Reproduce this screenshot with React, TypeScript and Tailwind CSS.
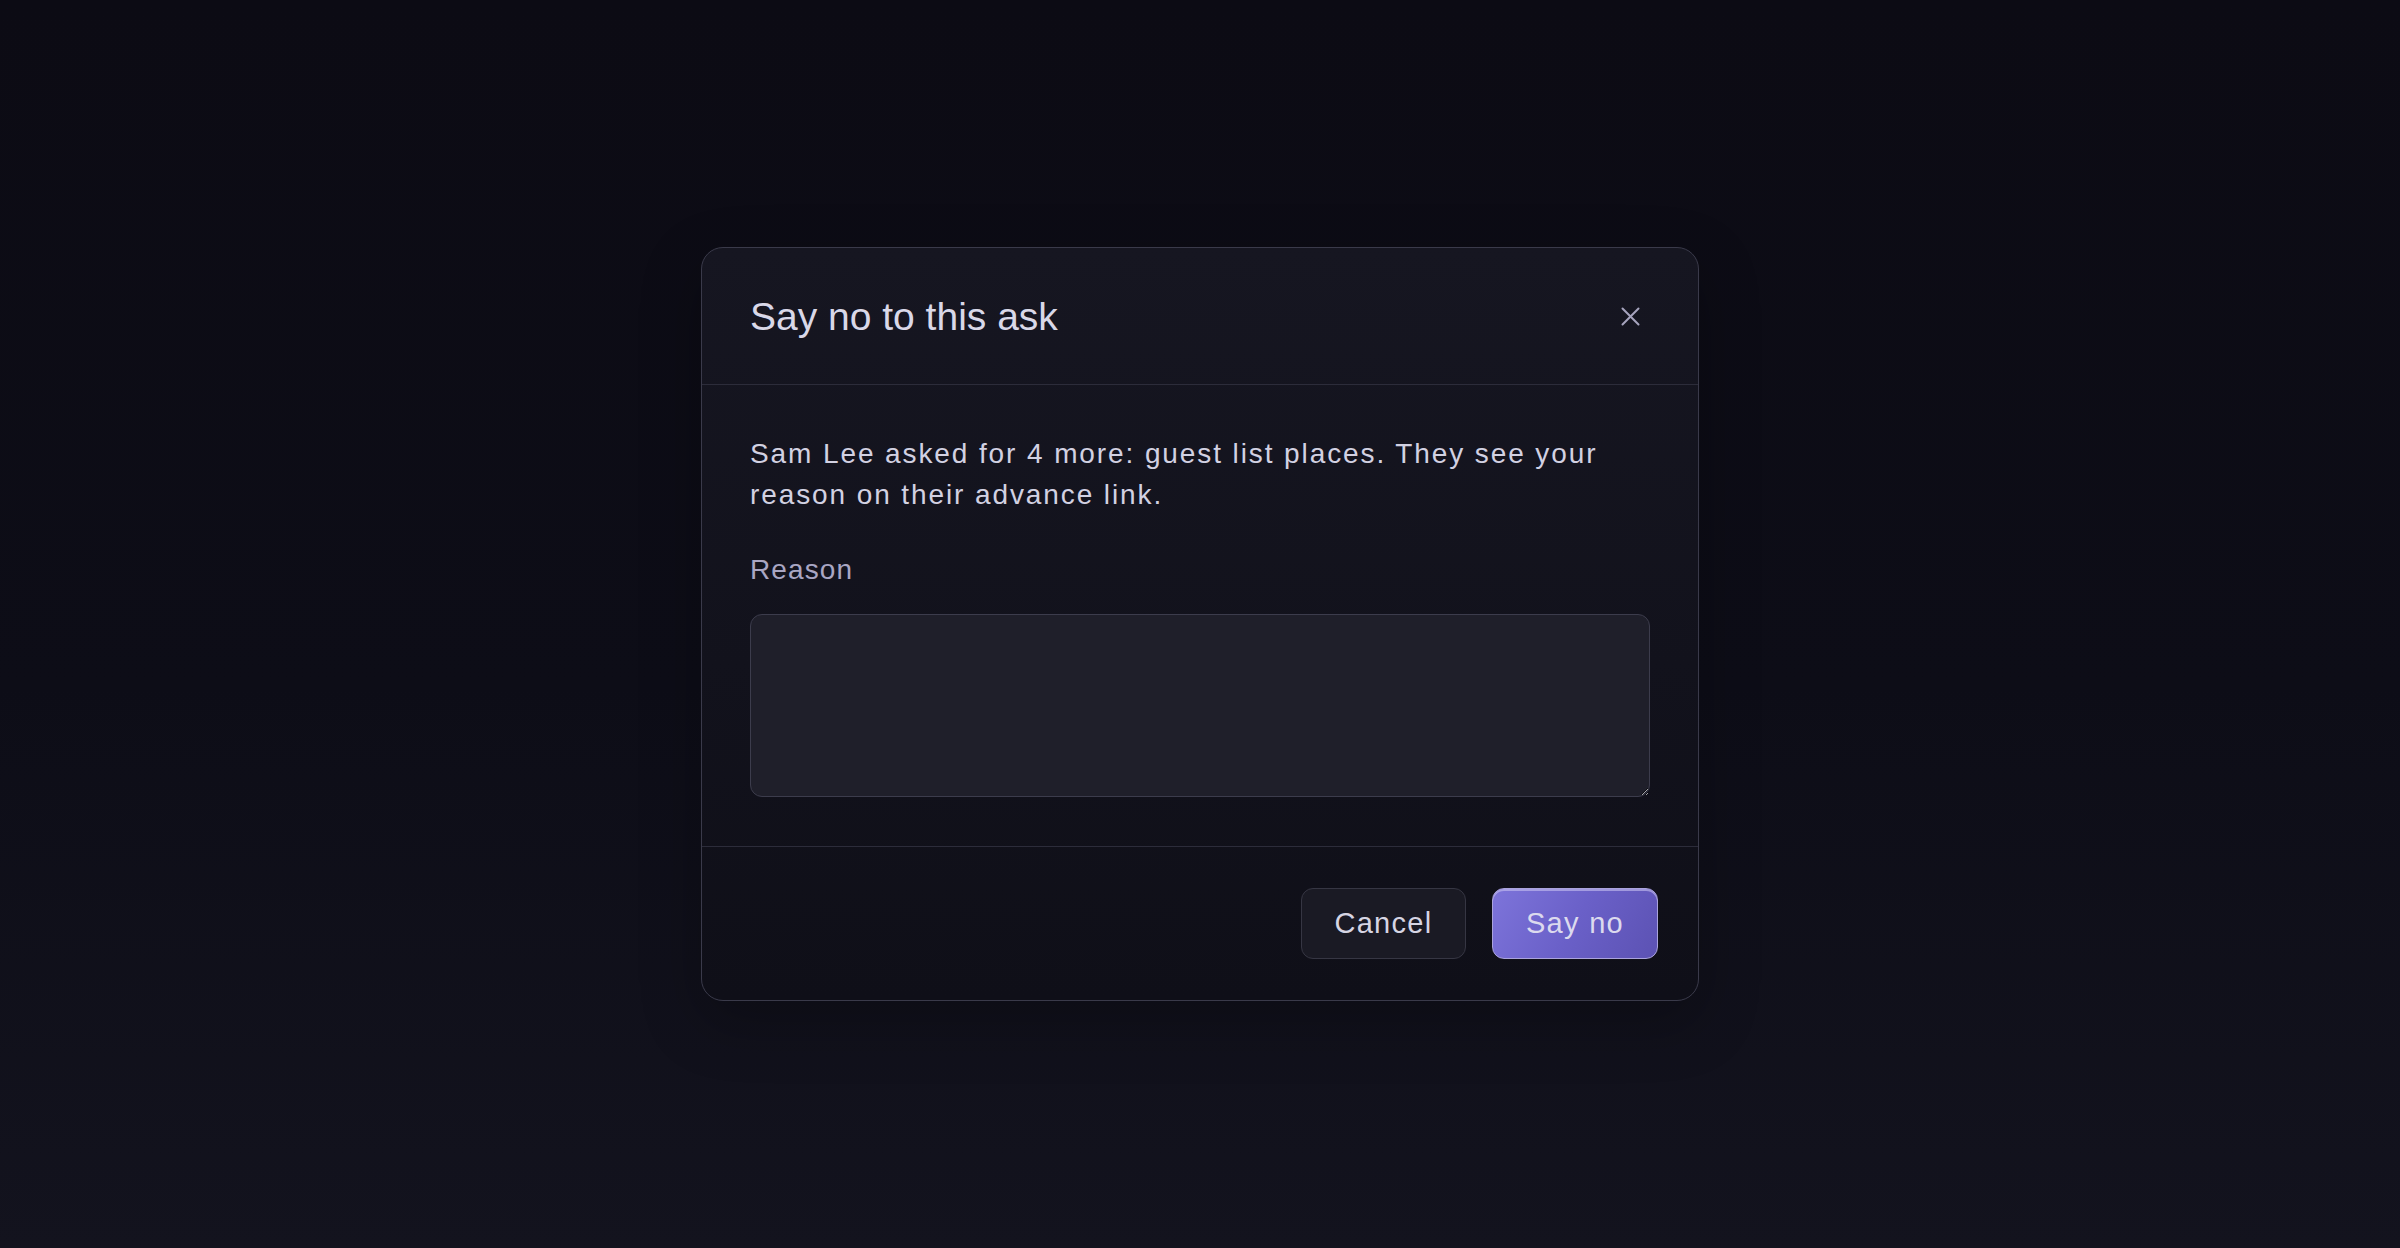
import React from "react";

export default function App() {
  return (
    <div
      className="relative flex h-screen w-full items-center justify-center overflow-hidden bg-[linear-gradient(180deg,#0c0b14_0%,#0d0d17_55%,#13131e_100%)]"
      style={{ fontFamily: '"Liberation Sans", Arial, sans-serif' }}
    >
      <div className="flex w-[998px] flex-col rounded-[22px] border border-[#3a3a4a] bg-[linear-gradient(180deg,#161621_0%,#12121c_55%,#0f0f18_100%)] shadow-[0_20px_60px_rgba(0,0,0,0.25)]">
        <div className="flex h-[137px] items-center justify-between border-b border-[#2c2c3a] pl-[48px] pr-[49px]">
          <h2 className="text-[39px] leading-none font-normal text-[#d9d8e8]">Say no to this ask</h2>
          <button className="flex h-[38px] w-[38px] items-center justify-center text-[#a6a4be]" aria-label="Close">
            <svg width="19" height="19" viewBox="0 0 19 19" fill="none" stroke="currentColor" strokeWidth="2" strokeLinecap="round">
              <path d="M1.5 1.5L17.5 17.5M17.5 1.5L1.5 17.5" />
            </svg>
          </button>
        </div>
        <div className="flex flex-col px-[48px] pt-[48px] pb-[49px]">
          <p className="text-[28px] leading-[41px] tracking-[1.9px] text-[#d2d1e2]">
            Sam Lee asked for 4 more: guest list places. They see your reason on their advance link.
          </p>
          <label className="mt-[32px] text-[28px] leading-[45px] tracking-[1.1px] text-[#a9a6c3]">Reason</label>
          <textarea className="mt-[22px] h-[183px] w-full resize-y rounded-[12px] border border-[#3c3c4c] bg-[#1f1f2a] p-4 text-[28px] text-[#d2d1e2] outline-none" />
        </div>
        <div className="flex items-center justify-end gap-[26px] border-t border-[#2c2c3a] px-[40px] py-[41px]">
          <button className="h-[71px] w-[165px] rounded-[12px] border border-[#363643] bg-[#1a1a24] text-[29px] tracking-[1.3px] text-[#d6d5e3]">
            Cancel
          </button>
          <button className="h-[71px] w-[166px] rounded-[12px] border border-[#aaa3dc] bg-[linear-gradient(120deg,#7d74da_0%,#6a60c8_50%,#5c52b3_100%)] text-[29px] tracking-[1.3px] text-[#dcdaee] shadow-[inset_0_2px_0_rgba(200,194,240,0.6)]">
            Say no
          </button>
        </div>
      </div>
    </div>
  );
}
